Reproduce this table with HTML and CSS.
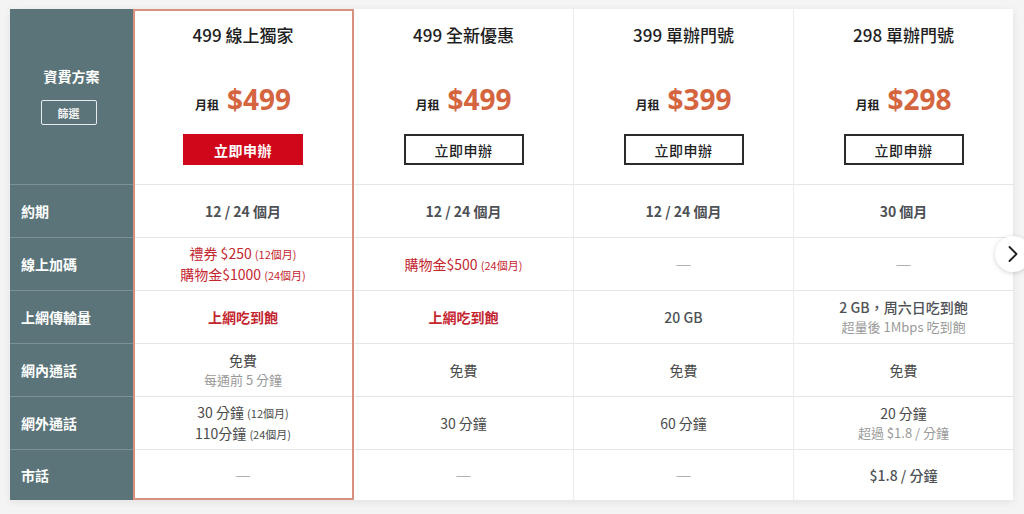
FILE: index.html
```html
<!DOCTYPE html>
<html lang="zh-Hant">
<head>
<meta charset="utf-8">
<title>資費方案</title>
<link rel="stylesheet" href="styles.css">
</head>
<body>
<div class="page">
  <div class="table">
    <div class="hl-frame"></div>

    <div class="label head">
      <div class="label-title">資費方案</div>
      <div class="filter-btn">篩選</div>
    </div>
    <div class="cell head">
      <div class="plan-name">499 線上獨家</div>
      <div class="price"><span class="unit">月租</span><span class="amount">$499</span></div>
      <div class="apply apply-red">立即申辦</div>
    </div>
    <div class="cell head">
      <div class="plan-name">499 全新優惠</div>
      <div class="price"><span class="unit">月租</span><span class="amount">$499</span></div>
      <div class="apply">立即申辦</div>
    </div>
    <div class="cell head">
      <div class="plan-name">399 單辦門號</div>
      <div class="price"><span class="unit">月租</span><span class="amount">$399</span></div>
      <div class="apply">立即申辦</div>
    </div>
    <div class="cell head last-col">
      <div class="plan-name">298 單辦門號</div>
      <div class="price"><span class="unit">月租</span><span class="amount">$298</span></div>
      <div class="apply">立即申辦</div>
    </div>

    <div class="label">約期</div>
    <div class="cell"><span class="strong">12 / 24 個月</span></div>
    <div class="cell"><span class="strong">12 / 24 個月</span></div>
    <div class="cell"><span class="strong">12 / 24 個月</span></div>
    <div class="cell last-col"><span class="strong">30 個月</span></div>

    <div class="label">線上加碼</div>
    <div class="cell red"><div>禮券 $250 <small>(12個月)</small></div><div>購物金$1000 <small>(24個月)</small></div></div>
    <div class="cell red"><div>購物金$500 <small>(24個月)</small></div></div>
    <div class="cell"><span class="dash">—</span></div>
    <div class="cell last-col"><span class="dash">—</span></div>

    <div class="label">上網傳輸量</div>
    <div class="cell red"><span class="strong">上網吃到飽</span></div>
    <div class="cell red"><span class="strong">上網吃到飽</span></div>
    <div class="cell"><span class="semi">20 GB</span></div>
    <div class="cell last-col"><div class="semi">2 GB，周六日吃到飽</div><div class="sub">超量後 1Mbps 吃到飽</div></div>

    <div class="label">網內通話</div>
    <div class="cell"><div>免費</div><div class="sub">每通前 5 分鐘</div></div>
    <div class="cell">免費</div>
    <div class="cell">免費</div>
    <div class="cell last-col">免費</div>

    <div class="label">網外通話</div>
    <div class="cell"><div>30 分鐘 <small>(12個月)</small></div><div>110分鐘 <small>(24個月)</small></div></div>
    <div class="cell">30 分鐘</div>
    <div class="cell">60 分鐘</div>
    <div class="cell last-col"><div>20 分鐘</div><div class="sub">超過 $1.8 / 分鐘</div></div>

    <div class="label last-row">市話</div>
    <div class="cell last-row"><span class="dash">—</span></div>
    <div class="cell last-row"><span class="dash">—</span></div>
    <div class="cell last-row"><span class="dash">—</span></div>
    <div class="cell last-row last-col"><span class="semi">$1.8 / 分鐘</span></div>
  </div>

  <button class="next" aria-label="下一頁">
    <svg width="16" height="18" viewBox="0 0 16 18"><path d="M4.5 2 L11.5 9 L4.5 16" fill="none" stroke="#1e1e1e" stroke-width="1.8" stroke-linecap="round" stroke-linejoin="round"/></svg>
  </button>
</div>
</body>
</html>
```

FILE: styles.css
```css
* { box-sizing: border-box; }

html, body {
  margin: 0;
  padding: 0;
  background: #f4f4f4;
  font-family: "Noto Sans CJK TC", "Noto Sans", sans-serif;
  overflow: hidden;
}

.page {
  position: relative;
  width: 1024px;
  height: 514px;
  padding: 9px 11px 0 10px;
}

.table {
  position: relative;
  display: grid;
  grid-template-columns: 123px 221px 220px 220px 219px;
  grid-template-rows: 176px repeat(5, 53px) 50px;
  background: #fff;
  box-shadow: 0 2px 8px rgba(0, 0, 0, 0.08);
}

.hl-frame {
  position: absolute;
  left: 123px;
  top: 0;
  width: 221px;
  bottom: 0;
  border: 2px solid #d9917f;
  pointer-events: none;
  z-index: 2;
}

.label {
  background: #5a7479;
  color: #fff;
  font-size: 14px;
  font-weight: 700;
  display: flex;
  align-items: center;
  padding-left: 11px;
  border-bottom: 1px solid #7b9195;
}

.label.head {
  flex-direction: column;
  justify-content: center;
  padding-left: 0;
  padding-bottom: 2px;
  gap: 14px;
}

.label-title {
  font-size: 14px;
  line-height: 20px;
}

.filter-btn {
  width: 56px;
  height: 25px;
  margin-right: 6px;
  border: 1px solid #e6ecec;
  border-radius: 2px;
  font-size: 11px;
  font-weight: 700;
  display: flex;
  align-items: center;
  justify-content: center;
  color: #f2f2f2;
}

.cell {
  display: flex;
  flex-direction: column;
  align-items: center;
  justify-content: center;
  text-align: center;
  font-size: 14px;
  line-height: 20px;
  color: #4a4a4a;
  font-weight: 400;
  border-bottom: 1px solid #e6e6e6;
  border-right: 1px solid #ececec;
}

.cell.last-col { border-right: none; }
.last-row { border-bottom: none; }

.cell.head {
  justify-content: flex-start;
  padding-top: 13px;
}

.plan-name {
  font-size: 17px;
  line-height: 26px;
  color: #1e1e1e;
  font-weight: 500;
}

.price {
  margin-top: 31px;
  height: 40px;
  display: flex;
  align-items: baseline;
  justify-content: center;
  gap: 8px;
}

.unit {
  font-size: 12px;
  font-weight: 700;
  color: #222;
}

.amount {
  font-family: "Noto Sans", "Open Sans", sans-serif;
  font-size: 28px;
  line-height: 40px;
  font-weight: 700;
  color: #d4653f;
}

.apply {
  margin-top: 15px;
  width: 120px;
  height: 31px;
  border: 2px solid #2b2b2b;
  font-size: 14px;
  font-weight: 500;
  color: #222;
  display: flex;
  align-items: center;
  justify-content: center;
  letter-spacing: 0.5px;
}

.apply-red {
  background: #d0071b;
  border-color: #d0071b;
  color: #fff;
  font-weight: 700;
}

.strong { font-weight: 700; color: #4e5256; }
.semi { font-weight: 500; color: #4e5256; }

.red { color: #c42630; }
.red .strong { color: #c42630; }

small {
  font-size: 11px;
  font-weight: 400;
}

.sub {
  color: #9a9a9a;
  font-weight: 400;
  font-size: 13px;
}

.dash {
  font-family: "Liberation Sans", sans-serif;
  font-size: 14px;
  color: #b0b0b0;
}

.next {
  position: absolute;
  left: 995px;
  top: 236px;
  width: 36px;
  height: 36px;
  border-radius: 50%;
  border: none;
  background: #fff;
  box-shadow: 0 1px 5px rgba(0, 0, 0, 0.18);
  display: flex;
  align-items: center;
  justify-content: flex-start;
  padding: 0 0 0 10px;
  z-index: 3;
}
```
